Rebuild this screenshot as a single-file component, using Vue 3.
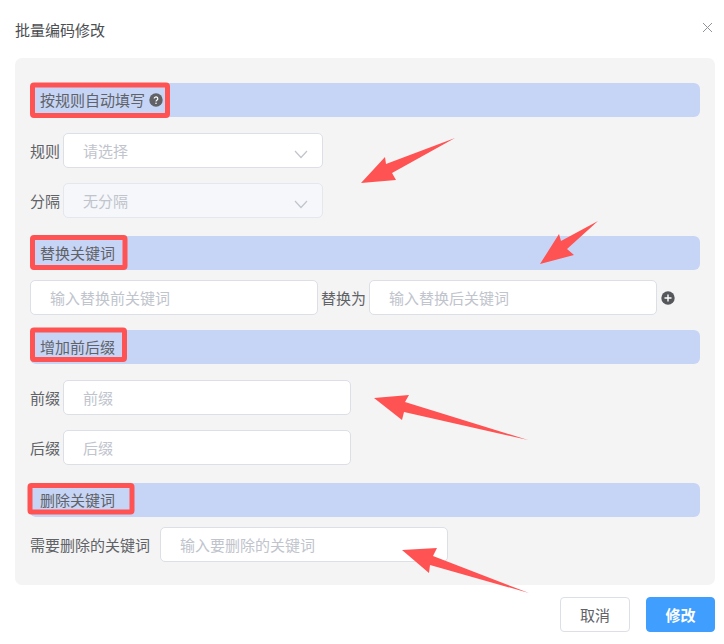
<template>
  <div class="dialog">
    <header class="dialog-header">
      <span class="dialog-title">批量编码修改</span>
      <svg class="close-icon" width="11" height="11" viewBox="0 0 11 11">
        <path d="M1 1l9 9M10 1l-9 9" stroke="#909399" stroke-width="1" fill="none" />
      </svg>
    </header>

    <section class="panel">
      <div class="bar">
        按规则自动填写
        <svg class="help-icon" width="14" height="14" viewBox="0 0 14 14">
          <circle cx="7" cy="7" r="6.7" fill="#606266" />
          <path d="M5.2 5.6a1.8 1.7 0 1 1 2.9 1.4c-.7.5-1.1.8-1.1 1.4" stroke="#fff" stroke-width="1.2" fill="none" />
          <circle cx="7" cy="10.2" r=".8" fill="#fff" />
        </svg>
      </div>
      <div class="row row-first">
        <label class="label">规则</label>
        <div class="select">
          <span class="select-text">请选择</span>
          <svg class="chevron" width="14" height="9" viewBox="0 0 14 9">
            <path d="M1 1l6 6.5L13 1" stroke="#c0c4cc" stroke-width="1.2" fill="none" />
          </svg>
        </div>
      </div>
      <div class="row">
        <label class="label">分隔</label>
        <div class="select select-disabled">
          <span class="select-text">无分隔</span>
          <svg class="chevron" width="14" height="9" viewBox="0 0 14 9">
            <path d="M1 1l6 6.5L13 1" stroke="#c0c4cc" stroke-width="1.2" fill="none" />
          </svg>
        </div>
      </div>

      <div class="bar bar-next">替换关键词</div>
      <div class="row row-tight">
        <input class="input input-wide" placeholder="输入替换前关键词" />
        <span class="replace-label">替换为</span>
        <input class="input input-wide" placeholder="输入替换后关键词" />
        <svg class="plus-icon" width="14" height="14" viewBox="0 0 14 14">
          <circle cx="7" cy="7" r="6.7" fill="#55575b" />
          <path d="M3.5 7h7M7 3.5v7" stroke="#fff" stroke-width="1.4" />
        </svg>
      </div>

      <div class="bar bar-plain">增加前后缀</div>
      <div class="row row-first">
        <label class="label">前缀</label>
        <input class="input input-wide" placeholder="前缀" />
      </div>
      <div class="row">
        <label class="label">后缀</label>
        <input class="input input-wide" placeholder="后缀" />
      </div>

      <div class="bar bar-next">删除关键词</div>
      <div class="row row-tight">
        <label class="label label-long">需要删除的关键词</label>
        <input class="input input-wide" placeholder="输入要删除的关键词" />
      </div>
    </section>

    <footer class="dialog-footer">
      <button class="btn">取消</button>
      <button class="btn btn-primary">修改</button>
    </footer>

    <!-- red annotations drawn on top of the screenshot -->
    <svg class="marks" width="724" height="644" viewBox="0 0 724 644">
      <g fill="none" stroke="#ff5252" stroke-width="5">
        <rect x="32.5" y="85" width="135" height="30.5" rx="1.5" />
        <rect x="32.5" y="237.5" width="92.5" height="30" rx="1.5" />
        <rect x="32.5" y="330" width="92" height="29.5" rx="1.5" />
        <rect x="30" y="485.5" width="102" height="26.5" rx="1.5" />
      </g>
      <g fill="#ff5252">
        <polygon points="455,138 386,164 385,157 361,183 396,180 392,173" />
        <polygon points="598,221 561,241 559,234 540,264 574,255 567,249" />
        <polygon points="528,440 405,402 409,395 374,398 402,420 404,412" />
        <polygon points="529,593 433,556 437,548 402,550 429,573 430,565" />
      </g>
    </svg>
  </div>
</template>

<script setup>
</script>

<style>
html,
body {
  margin: 0;
  background: #fff;
}
</style>

<style scoped>
.dialog {
  position: relative;
  width: 724px;
  height: 644px;
  overflow: hidden;
  background: #fff;
  font-family: "Noto Sans CJK SC", "Liberation Sans", sans-serif;
  font-size: 15px;
  color: #606266;
}

.dialog-header {
  display: flex;
  justify-content: space-between;
  align-items: flex-start;
  height: 58px;
  padding: 0 11px 0 15px;
  box-sizing: border-box;
}

.dialog-title {
  margin-top: 19px;
  line-height: 22px;
  color: #4c4e52;
}

.close-icon {
  margin-top: 22px;
}

.panel {
  width: 700px;
  margin-left: 15px;
  padding: 25px 15px 23px;
  box-sizing: border-box;
  background: #f4f4f5;
  border-radius: 7px;
}

.bar {
  display: flex;
  align-items: center;
  height: 33.5px;
  padding-left: 10px;
  background: #c6d5f6;
  border-radius: 6px;
}

.bar-next {
  margin-top: 18px;
}

.bar-plain {
  margin-top: 15px;
}

.help-icon {
  margin-left: 4px;
}

.row {
  display: flex;
  align-items: center;
  height: 35px;
  margin-top: 15px;
}

.row-first {
  margin-top: 16.5px;
}

.row-tight {
  margin-top: 10.5px;
}

.label {
  width: 33px;
  flex-shrink: 0;
}

.label-long {
  width: 130px;
}

.replace-label {
  width: 45px;
  margin: 0 3px;
  flex-shrink: 0;
}

.input,
.select {
  height: 35px;
  padding: 0 19px;
  box-sizing: border-box;
  background: #fff;
  border: 1px solid #dcdfe6;
  border-radius: 5px;
  font: inherit;
  outline: none;
}

.input::placeholder {
  color: #c0c4cc;
  opacity: 1;
}

.input-wide {
  width: 288px;
}

.select {
  position: relative;
  display: flex;
  align-items: center;
  width: 260px;
  color: #c0c4cc;
}

.select-disabled {
  background: #f5f7fa;
  border-color: #e4e7ed;
}

.chevron {
  position: absolute;
  top: 16px;
  right: 14px;
}

.plus-icon {
  margin-left: 4px;
}

.dialog-footer {
  display: flex;
  justify-content: flex-end;
  gap: 16px;
  width: 700px;
  margin: 12px 0 0 15px;
}

.btn {
  width: 70px;
  height: 35px;
  padding: 0;
  background: #fff;
  border: 1px solid #dcdfe6;
  border-radius: 4px;
  font: inherit;
  color: #606266;
}

.btn-primary {
  width: 69px;
  background: #409eff;
  border-color: #409eff;
  color: #fff;
  font-weight: 600;
}

.marks {
  position: absolute;
  top: 0;
  left: 0;
  pointer-events: none;
}
</style>
